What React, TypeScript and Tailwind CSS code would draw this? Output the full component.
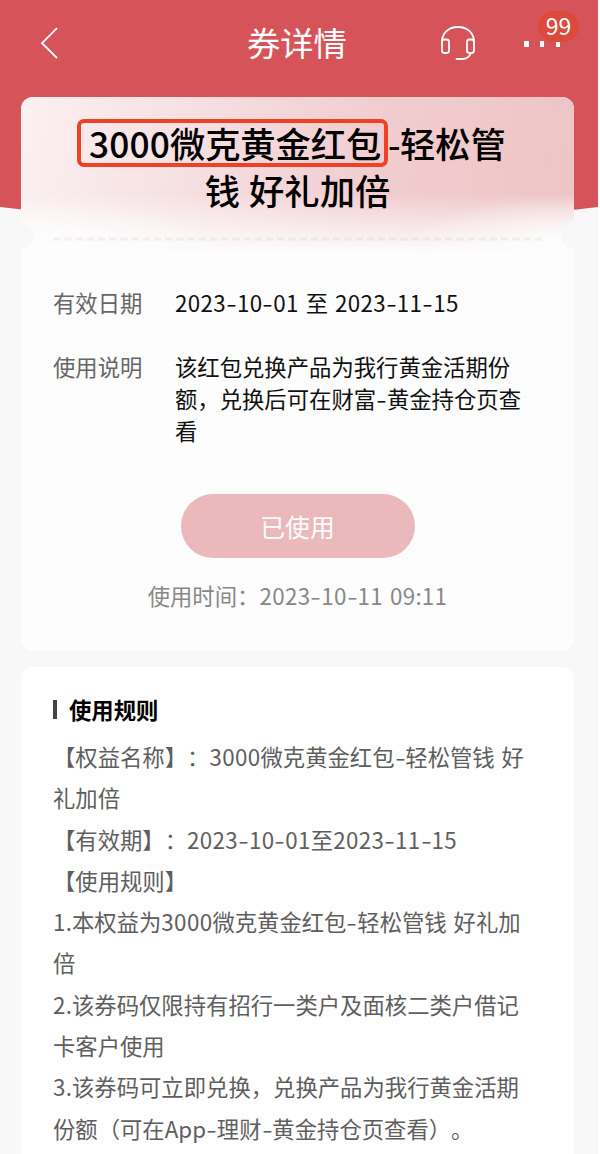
import React from "react";

/* Digits and hyphens are set slightly wider than the CJK font's defaults. */
function T({ children }: { children: string }) {
  const parts = children.split(/(\d+|-)/).filter(Boolean);
  return (
    <>
      {parts.map((p, i) =>
        p === "-" ? (
          <span key={i} className="inline-block w-[0.485em] scale-x-[1.35] text-center">-</span>
        ) : /^\d+$/.test(p) ? (
          <span key={i} className="tracking-[0.016em]">{p}</span>
        ) : (
          <span key={i} className="[word-spacing:0.085em]">{p}</span>
        )
      )}
    </>
  );
}

const usage = ["该红包兑换产品为我行黄金活期份", "额，兑换后可在财富-黄金持仓页查", "看"];

const rules = [
  "【权益名称】：3000微克黄金红包-轻松管钱 好",
  "礼加倍",
  "【有效期】：2023-10-01至2023-11-15",
  "【使用规则】",
  "1.本权益为3000微克黄金红包-轻松管钱 好礼加",
  "倍",
  "2.该券码仅限持有招行一类户及面核二类户借记",
  "卡客户使用",
  "3.该券码可立即兑换，兑换产品为我行黄金活期",
  "份额（可在App-理财-黄金持仓页查看）。",
];

function Header() {
  return (
    <header className="flex h-[97px] shrink-0 items-start pl-[40px] pr-[20px] text-white">
      <svg className="mt-[27px] h-[32px] w-[18px]" viewBox="0 0 18 32" fill="none" stroke="currentColor" strokeWidth="1.8">
        <path d="M17 1.2 2 16.2 17 31" />
      </svg>
      <h1 className="ml-[189px] w-[100px] whitespace-nowrap text-[33.3px] leading-[83px]">券详情</h1>
      <svg className="ml-[93px] mt-[25px] h-[36px] w-[36px] shrink-0" viewBox="0 0 36 36" fill="none" stroke="currentColor" strokeWidth="1.8">
        <path d="M2 18v-1C2 8.200 8.500 2 18 2s16 6.200 16 15v1" />
        <rect x="2" y="14.500" width="7" height="13.500" rx="2.500" />
        <rect x="27" y="14.500" width="7" height="13.500" rx="2.500" />
        <path d="M31 28c-1.500 4.200-5 6-9 6h-6.200" />
      </svg>
      <div className="relative ml-[48px] mt-[41px] flex w-[36px] shrink-0 justify-between">
        <i className="h-[6px] w-[4.500px] bg-white" />
        <i className="h-[6px] w-[4.500px] bg-white" />
        <i className="h-[6px] w-[4.500px] bg-white" />
        <span className="absolute -top-[30px] left-[14px] h-[31px] w-[41px] rounded-full bg-[#dc493d] text-center text-[23px] leading-[29px]">
          99
        </span>
      </div>
    </header>
  );
}

export default function App() {
  return (
    <div className="h-[1154px] overflow-hidden bg-white text-[22.35px] [text-spacing-trim:space-all]" style={{ fontFamily: '"Noto Sans CJK SC", sans-serif' }}>
      <div className="relative isolate flex h-full w-[598px] flex-col overflow-hidden bg-[#f8f8f8]">
        <svg className="absolute left-0 top-0 -z-10 h-[240px] w-[598px]" viewBox="0 0 598 240">
          <path d="M0 0H598V207Q299 245 0 207Z" fill="#d65459" />
        </svg>
        <Header />

        <section className="relative ml-[21px] h-[554px] w-[553px] shrink-0 overflow-hidden rounded-[12px] bg-[#fdfdfd]">
          <div className="flex h-[160px] flex-col items-center bg-[radial-gradient(ellipse_38%_32%_at_0%_96%,#fdfdfd_15%,transparent),radial-gradient(ellipse_30%_32%_at_100%_94%,#fdfdfd_10%,transparent),linear-gradient(to_bottom,transparent_60%,#fdfdfd_98%),linear-gradient(98deg,#fbf0f0_0%,#f6dfe1_32%,#f1cdd0_62%,#eec4c5_100%)] pt-[22px] text-[35.300px] leading-[48px] font-medium text-black">
            <div className="flex w-[441px] items-center whitespace-nowrap">
              <span className="h-[48px] w-[311px] rounded-[7px] border-4 border-[#ee4226] pl-[8px] leading-[39px]">
                <span className="tracking-[0.003em]">3000</span><span className="tracking-[-0.002em]">微克黄金红包</span>
              </span>
              <span className="leading-[46px]">
                <span className="inline-block w-[12px] text-center">-</span>轻松管
              </span>
            </div>
            <div className="-mt-px whitespace-nowrap [word-spacing:0.03em]">钱 好礼加倍</div>
          </div>
          <i className="absolute -left-[13px] top-[126px] size-[26px] rounded-full bg-[#f8f8f8]" />
          <i className="absolute -right-[13px] top-[126px] size-[26px] rounded-full bg-[#f8f8f8]" />
          <svg className="absolute left-[32px] top-[140px] h-[4px] w-[489px]" viewBox="0 0 489 4">
            <path d="M0 2H489" stroke="#77676b" strokeOpacity=".08" strokeWidth="3" strokeDasharray="7.500 3.700" />
          </svg>

          <div className="mt-[29px] flex flex-col gap-[32px] pl-[32px] leading-[32px] text-[#111]">
            <div className="flex whitespace-nowrap">
              <span className="w-[122px] text-[#666]">有效日期</span>
              <span><T>2023-10-01 至 2023-11-15</T></span>
            </div>
            <div className="flex whitespace-nowrap">
              <span className="w-[122px] text-[#666]">使用说明</span>
              <div>{usage.map((l) => <p key={l}><T>{l}</T></p>)}</div>
            </div>
          </div>
          <div className="mt-[48px] flex flex-col items-center">
            <button className="h-[64px] w-[234px] rounded-full bg-[#ebb8bb] text-[24.800px] leading-[61px] text-white">已使用</button>
            <p className="mt-[21px] whitespace-nowrap leading-[32px] text-[#888]"><T>使用时间：2023-10-11 09:11</T></p>
          </div>
        </section>

        <section className="ml-[21px] mt-[16px] h-[540px] w-[553px] shrink-0 rounded-[12px] bg-white pl-[32px] pt-[26px]">
          <h2 className="flex items-center font-bold leading-[32px] text-black">
            <i className="mr-[12px] h-[19px] w-[4px] bg-[#444]" />
            使用规则
          </h2>
          <div className="mt-[11px] whitespace-nowrap leading-[41.300px] text-[#5e5e5e]">
            {rules.map((l) => <p key={l}><T>{l}</T></p>)}
          </div>
        </section>
      </div>
    </div>
  );
}
